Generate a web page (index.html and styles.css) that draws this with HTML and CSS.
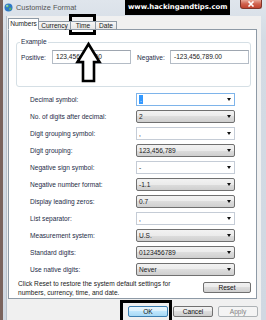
FILE: index.html
```html
<!DOCTYPE html>
<html lang="en">

<head>
    <meta charset="UTF-8">
    <title>Customize Format</title>
    <link rel="stylesheet" href="styles.css">
</head>

<body>
    <div class="window">
        <div class="titlebar">
            <svg class="app-icon" viewBox="0 0 9 9">
                <circle cx="4.5" cy="4.5" r="4" fill="#2f78c8" />
                <path d="M2 2.5 L4 1.5 L5 3 L3.5 4.5 L2 4 Z" fill="#5cb85c" />
                <path d="M5 5 L7.5 4.5 L7 7 L5.5 7.5 Z" fill="#5cb85c" />
                <circle cx="3" cy="2.8" r="1" fill="#bfe3ff" opacity=".6" />
            </svg>
            <span class="title">Customize Format</span>
            <span class="watermark">www.hackingandtips.com</span>
            <span class="close">
                <svg viewBox="0 0 8 6" width="8" height="6">
                    <path d="M1.5 0.5 L6.5 5.5 M6.5 0.5 L1.5 5.5" stroke="#fff" stroke-width="1.6" />
                </svg>
            </span>
        </div>
        <div class="client">
            <div class="tabs">
                <span class="tab active">Numbers</span>
                <span class="tab">Currency</span>
                <span class="tab">Time</span>
                <span class="tab">Date</span>
            </div>
            <div class="panel">
                <fieldset class="example">
                    <legend>Example</legend>
                    <div class="example-row">
                        <span class="ex-label">Positive:</span>
                        <span class="field">123,456,789.00</span>
                        <span class="ex-label neg">Negative:</span>
                        <span class="field">-123,456,789.00</span>
                    </div>
                </fieldset>

                <div class="settings">
                    <div class="row"><span class="label">Decimal symbol:</span><span class="combo edit focus"><span class="sel">.</span><i></i></span></div>
                    <div class="row"><span class="label">No. of digits after decimal:</span><span class="combo list">2<i></i></span></div>
                    <div class="row"><span class="label">Digit grouping symbol:</span><span class="combo edit">,<i></i></span></div>
                    <div class="row"><span class="label">Digit grouping:</span><span class="combo list">123,456,789<i></i></span></div>
                    <div class="row"><span class="label">Negative sign symbol:</span><span class="combo edit">-<i></i></span></div>
                    <div class="row"><span class="label">Negative number format:</span><span class="combo list">-1.1<i></i></span></div>
                    <div class="row"><span class="label">Display leading zeros:</span><span class="combo list">0.7<i></i></span></div>
                    <div class="row"><span class="label">List separator:</span><span class="combo edit">,<i></i></span></div>
                    <div class="row"><span class="label">Measurement system:</span><span class="combo list">U.S.<i></i></span></div>
                    <div class="row"><span class="label">Standard digits:</span><span class="combo list">0123456789<i></i></span></div>
                    <div class="row"><span class="label">Use native digits:</span><span class="combo list">Never<i></i></span></div>
                </div>

                <div class="reset-row">
                    <p>Click Reset to restore the system default settings for numbers, currency, time, and date.</p>
                    <button class="btn reset">Reset</button>
                </div>
            </div>
            <div class="buttons">
                <button class="btn default">OK</button>
                <button class="btn">Cancel</button>
                <button class="btn" disabled>Apply</button>
            </div>
        </div>
    </div>

    <!-- highlight marks drawn over the screenshot -->
    <div class="mark mark-time"></div>
    <div class="mark mark-ok"></div>
    <svg class="arrow" viewBox="0 0 30 44">
        <polygon points="14.5,3 25.5,21 20,21 20,40 9,40 9,21 3.5,21" fill="#fff" stroke="#000" stroke-width="2.6" />
    </svg>
</body>

</html>
```

FILE: styles.css
```css
* {
    box-sizing: border-box;
}

body {
    margin: 0;
    width: 266px;
    height: 320px;
    overflow: hidden;
    position: relative;
    font-family: "Liberation Sans", Arial, sans-serif;
    font-size: 6.6px;
    color: #1e2c47;
    background: #7a635d;
}

.window {
    margin-left: 3px;
    height: 320px;
    display: flex;
    flex-direction: column;
    background: linear-gradient(#dfe5ec, #d3dbe4 40px, #d0d8e2);
}

/* title bar */

.titlebar {
    height: 16px;
    display: flex;
    align-items: flex-start;
    flex: none;
}

.app-icon {
    width: 9px;
    height: 9px;
    margin: 3px 0 0 1px;
}

.title {
    margin: 3px 0 0 3px;
    font-size: 7.4px;
    line-height: 9px;
    color: #555;
}

.watermark {
    margin-left: auto;
    width: 105px;
    height: 15px;
    padding-left: 3px;
    background: #000;
    color: #fff;
    font: bold 6.9px "DejaVu Sans", sans-serif;
    line-height: 15px;
    white-space: nowrap;
}

.close {
    margin: 0 4px 0 10px;
    width: 22px;
    height: 9px;
    display: flex;
    align-items: center;
    justify-content: center;
    background: linear-gradient(#e8a898, #d0604c 50%, #c0432f);
    border: 1px solid #80352a;
    border-top: none;
    border-radius: 0 0 3px 3px;
}

/* dialog client area */

.client {
    flex: 1;
    margin: 0 5px 0 3px;
    padding: 2px 4px 0 1px;
    background: #f0f0f0;
    border-left: 1px solid #b9c1cb;
    display: flex;
    flex-direction: column;
}

.tabs {
    height: 12px;
    margin-bottom: -1px;
    display: flex;
    align-items: flex-end;
    position: relative;
    z-index: 1;
}

.tab {
    height: 9px;
    border: 1px solid #8e9aa6;
    border-left: none;
    background: linear-gradient(#f7f7f7, #e6e6e6);
    text-align: center;
    line-height: 7px;
    color: #1a1a1a;
}

.tab:nth-child(1) {
    width: 31px;
}

.tab:nth-child(2) {
    width: 32px;
}

.tab:nth-child(3) {
    width: 25px;
}

.tab:nth-child(4) {
    width: 21px;
}

.tab.active {
    height: 12px;
    border-left: 1px solid #8e9aa6;
    border-bottom-color: #fff;
    background: #fff;
    line-height: 10px;
}

.panel {
    height: 270px;
    flex: none;
    padding: 8px 5px 0 7px;
    background: #fff;
    border: 1px solid #8e9aa6;
    display: flex;
    flex-direction: column;
}

/* example group */

.example {
    margin: 0;
    padding: 4px 1px 22px 4px;
    border: 1px solid #d5dfe5;
    border-radius: 3px;
}

.example legend {
    padding: 0 1px;
    margin-left: -1px;
    line-height: 8px;
    color: #1e2c47;
}

.example-row {
    display: flex;
    align-items: center;
}

.ex-label {
    width: 31px;
}

.ex-label.neg {
    width: 33px;
    margin-left: 6px;
}

.field {
    width: 79px;
    height: 14px;
    padding-left: 3px;
    border: 1px solid #b4bcc6;
    border-top-color: #9ea6b0;
    background: #fff;
    line-height: 12px;
    color: #1a1a1a;
}

/* settings list */

.settings {
    margin-top: 4px;
}

.row {
    height: 17px;
    padding-left: 14px;
    display: flex;
    align-items: center;
}

.label {
    width: 106px;
}

.combo {
    width: 99px;
    height: 13px;
    padding-left: 2px;
    border: 1px solid #707070;
    display: flex;
    align-items: center;
    color: #1a1a1a;
}

.combo i {
    margin: 0 3px 0 auto;
    border-left: 2.5px solid transparent;
    border-right: 2.5px solid transparent;
    border-top: 3px solid #111;
}

.combo.list {
    border-radius: 2px;
    background: linear-gradient(#f2f2f2, #ebebeb 50%, #dddddd 50%, #cfcfcf);
}

.combo.edit {
    background: #fff;
    border-color: #c5ccd6;
}

.combo.focus {
    border-color: #7eb4ea;
}

.sel {
    padding: 0 1px;
    background: #3399ff;
    color: #fff;
    line-height: 9px;
}

/* reset */

.reset-row {
    margin-top: 1px;
    padding-left: 2px;
    display: flex;
    align-items: flex-start;
}

.reset-row p {
    width: 175px;
    margin: 0;
    line-height: 9px;
    color: #1a1a1a;
}

.btn {
    width: 40px;
    height: 11px;
    padding: 0;
    font: inherit;
    line-height: 9px;
    color: #111;
    border: 1px solid #707070;
    border-radius: 2px;
    background: linear-gradient(#f2f2f2, #ebebeb 50%, #dddddd 50%, #cfcfcf);
}

.btn.reset {
    width: 48px;
    margin: 3px 0 0 auto;
}

.btn.default {
    border-color: #3c7fb1;
    background: linear-gradient(#eaf6fd, #d9f0fc 50%, #bee6fd 50%, #a7d9f5);
}

.btn:disabled {
    border-color: #adb2b5;
    background: #f4f4f4;
    color: #838383;
}

.buttons {
    margin: 7px -1px 0 0;
    display: flex;
    justify-content: flex-end;
    gap: 5px;
}

/* annotations */

.mark {
    position: absolute;
    border: 3px solid #000;
}

.mark-time {
    left: 69px;
    top: 14px;
    width: 27px;
    height: 21px;
}

.mark-ok {
    left: 120px;
    top: 300px;
    width: 52px;
    height: 24px;
}

.arrow {
    position: absolute;
    left: 74px;
    top: 41px;
    width: 30px;
    height: 44px;
}
```
